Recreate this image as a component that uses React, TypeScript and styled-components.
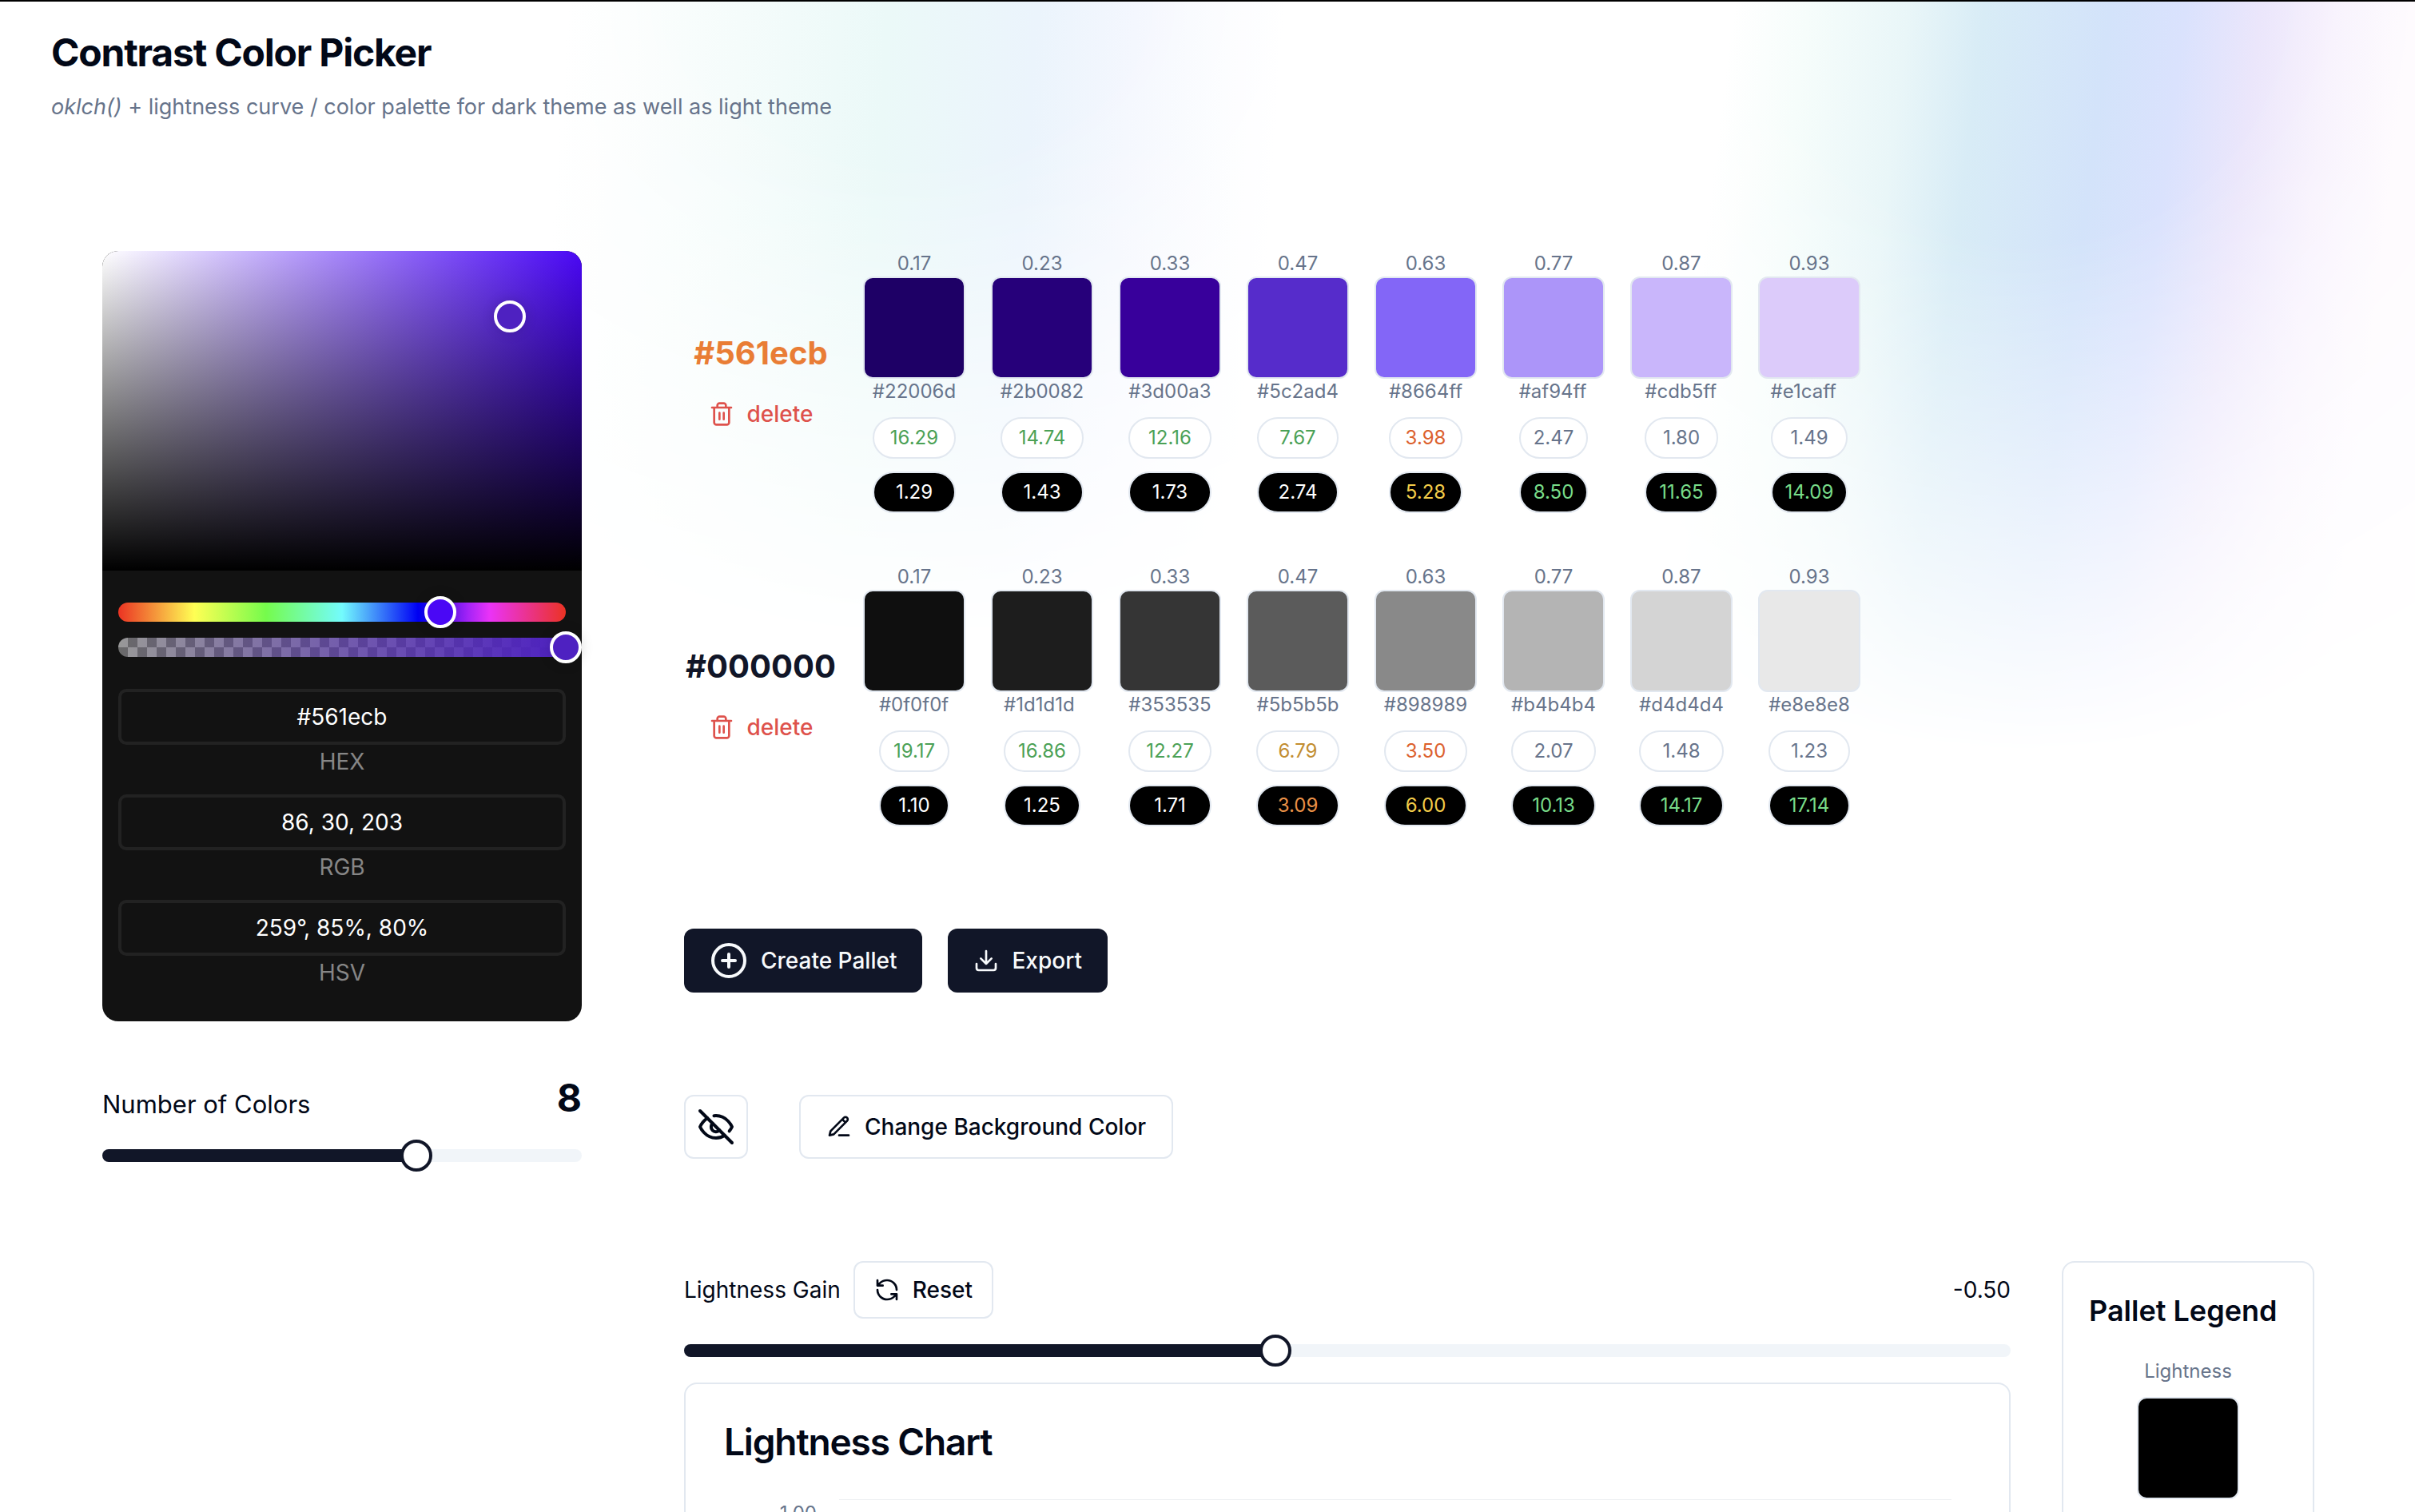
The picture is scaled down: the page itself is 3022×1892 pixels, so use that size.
import React, { useState } from "react";
import styled, { createGlobalStyle } from "styled-components";

const ink = "#020817";
const primary = "#111628";
const muted = "#67748b";
const line = "#e2e8f0";

const GlobalStyle = createGlobalStyle`
  *, *::before, *::after { box-sizing: border-box; }
  body {
    margin: 0;
    background: #fff;
    color: ${ink};
    font-family: Inter, "Liberation Sans", sans-serif;
    font-size: 28px;
    line-height: 40px;
  }
  h1, h2, h3, p { margin: 0; }
  button, input { font: inherit; color: inherit; }
`;

const Page = styled.div`
  position: relative;
  height: 100vh;
  overflow-y: auto;
  scrollbar-width: none;
  border-top: 2px solid #000;
`;

const Glow = styled.div<{ $tint: string; $shape: string }>`
  position: absolute;
  inset: 0 0 auto;
  height: 1000px;
  pointer-events: none;
  background: ${(p) => p.$tint};
  mask-image: ${(p) => p.$shape};
`;

const Header = styled.header`
  position: relative;
  display: flex;
  flex-direction: column;
  gap: 16px;
  padding: 32px 64px 0;
`;

const Title = styled.h1`
  font-size: 48px;
  line-height: 64px;
  font-weight: 700;
  letter-spacing: -0.025em;
`;

const Subtitle = styled.p`
  font-size: 27px;
  color: ${muted};
`;

const Main = styled.main`
  position: relative;
  display: grid;
  grid-template-columns: 600px minmax(0, 1fr);
  align-items: start;
  gap: 128px;
  padding: 160px 126px 128px 128px;
`;

const Side = styled.aside`
  display: flex;
  flex-direction: column;
  gap: 64px;
`;

const Picker = styled.div`
  border-radius: 20px;
  background: #121212;
`;

const Saturation = styled.div`
  position: relative;
  height: 400px;
  border-radius: 20px 20px 0 0;
  background: linear-gradient(0deg, #000, transparent), linear-gradient(90deg, #fff, #4a08f5);
`;

const Cursor = styled.button`
  position: absolute;
  width: 40px;
  height: 40px;
  padding: 0;
  transform: translate(-50%, -50%);
  border: 4px solid #fff;
  border-radius: 50%;
  background: #4e21c1;
  box-shadow: 0 0 16px rgba(0, 0, 0, 0.15);
`;

const PickerBody = styled.div`
  display: flex;
  flex-direction: column;
  gap: 40px;
  padding: 40px 20px;
`;

const Bars = styled.div`
  display: flex;
  flex-direction: column;
  gap: 20px;
`;

const Bar = styled.div<{ $fill: string }>`
  display: flex;
  align-items: center;
  height: 24px;
  border-radius: 12px;
  background: ${(p) => p.$fill};
`;

const BarInput = styled.input<{ $color: string }>`
  appearance: none;
  flex: none;
  width: calc(100% + 40px);
  height: 40px;
  margin: 0 -20px;
  background: transparent;
  &::-webkit-slider-thumb {
    appearance: none;
    width: 40px;
    height: 40px;
    border: 4px solid #fff;
    border-radius: 50%;
    background: ${(p) => p.$color};
    box-shadow: 0 0 16px rgba(0, 0, 0, 0.15);
  }
`;

const Fields = styled.div`
  display: flex;
  flex-direction: column;
  gap: 20px;
`;

const Field = styled.label`
  display: flex;
  flex-direction: column;
  color: #868686;
  line-height: 42px;
  text-align: center;
`;

const FieldInput = styled.input`
  width: 100%;
  height: 70px;
  border: 4px solid #222;
  border-radius: 10px;
  background: transparent;
  color: #fff;
  text-align: center;
`;

const Control = styled.div`
  display: flex;
  flex-direction: column;
  gap: 20px;
`;

const ControlHead = styled.div<{ $align: string }>`
  display: flex;
  align-items: ${(p) => p.$align};
  gap: 16px;
`;

const CountLabel = styled.label`
  font-size: 31px;
  line-height: 48px;
`;

const Count = styled.output`
  margin-left: auto;
  font-size: 48px;
  line-height: 64px;
  font-weight: 700;
`;

const Gain = styled.output`
  margin-left: auto;
`;

const Range = styled.input`
  appearance: none;
  display: block;
  width: 100%;
  height: 40px;
  margin: 0;
  background: transparent;
  &::-webkit-slider-runnable-track {
    height: 16px;
    border-radius: 8px;
    background: linear-gradient(90deg, ${primary} var(--fill), #f1f5f9 var(--fill));
  }
  &::-webkit-slider-thumb {
    appearance: none;
    width: 40px;
    height: 40px;
    margin-top: -12px;
    border: 4px solid ${primary};
    border-radius: 50%;
    background: #fff;
  }
`;

const Content = styled.div`
  display: flex;
  flex-direction: column;
  gap: 128px;
`;

const Palettes = styled.div`
  display: flex;
  flex-direction: column;
  gap: 64px;
`;

const PaletteRow = styled.section`
  display: flex;
  align-items: center;
  gap: 32px;
`;

const PaletteHead = styled.div`
  display: flex;
  flex-direction: column;
  align-items: center;
  width: 192px;
  padding-top: 8px;
`;

const PaletteName = styled.h2<{ $active: boolean }>`
  font-size: 40px;
  line-height: 72px;
  font-weight: 700;
  color: ${(p) => (p.$active ? "#e97d35" : primary)};
`;

const Swatches = styled.ul`
  display: flex;
  gap: 32px;
  margin: 0;
  padding: 0;
  list-style: none;
`;

const SwatchItem = styled.li`
  display: flex;
  flex-direction: column;
  align-items: center;
  width: 128px;
  font-size: 24px;
  line-height: 32px;
  color: ${muted};
`;

const Swatch = styled.div<{ $color: string }>`
  width: 128px;
  height: 128px;
  border: 2px solid ${line};
  border-radius: 12px;
  background: ${(p) => p.$color};
`;

const Details = styled.div`
  display: grid;
  gap: 16px;
`;

const Pill = styled.span<{ $dark?: boolean; $color: string }>`
  display: block;
  height: 52px;
  padding: 0 16px;
  border: 2px solid ${line};
  border-radius: 26px;
  background: ${(p) => (p.$dark ? "#000" : "#fff")};
  color: ${(p) => p.$color};
  line-height: 48px;
  text-align: center;
`;

const Actions = styled.div<{ $gap: number }>`
  display: flex;
  gap: ${(p) => p.$gap}px;
`;

const Button = styled.button<{ $kind: "solid" | "outline" | "danger"; $size?: "small" | "icon" }>`
  display: inline-flex;
  align-items: center;
  justify-content: center;
  gap: 16px;
  height: ${(p) => (p.$size === "small" ? 72 : 80)}px;
  width: ${(p) => (p.$size === "icon" ? "80px" : "auto")};
  padding: 0 ${(p) => (p.$size === "icon" ? 0 : p.$size === "small" ? 24 : 32)}px;
  border: ${(p) => (p.$kind === "outline" ? `2px solid ${line}` : "0")};
  border-radius: 12px;
  background: ${(p) => (p.$kind === "solid" ? primary : p.$kind === "outline" ? "#fff" : "transparent")};
  color: ${(p) => (p.$kind === "solid" ? "#f8fafc" : p.$kind === "danger" ? "#de524c" : ink)};
  font-weight: 500;
  white-space: nowrap;
`;

const Panels = styled.div`
  display: grid;
  grid-template-columns: minmax(0, 1fr) 316px;
  align-items: start;
  gap: 64px;
`;

const Card = styled.section<{ $pad: number }>`
  padding: ${(p) => p.$pad}px;
  border: 2px solid ${line};
  border-radius: 16px;
  background: #fff;
`;

const CardTitle = styled.h2`
  font-size: 46px;
  line-height: 48px;
  font-weight: 600;
  letter-spacing: -0.025em;
`;

const Chart = styled.div`
  display: grid;
  grid-template-columns: 116px minmax(0, 1fr);
  column-gap: 28px;
  padding: 48px 24px 0 0;
  font-size: 24px;
  line-height: 32px;
  color: ${muted};
`;

const Tick = styled.span`
  height: 160px;
  padding-top: 2px;
  text-align: right;
`;

const PlotBand = styled.div`
  border-top: 1px solid #eef0f2;
`;

const Legend = styled(Card)`
  min-height: 640px;
`;

const LegendTitle = styled.h3`
  font-size: 36px;
  line-height: 56px;
  font-weight: 600;
`;

const LegendItem = styled.div`
  display: flex;
  flex-direction: column;
  align-items: center;
  gap: 16px;
  padding-top: 32px;
  font-size: 24px;
  line-height: 32px;
  color: ${muted};
`;

const Icon = ({ size = 32, children }: { size?: number; children: React.ReactNode }) => (
  <svg
    width={size}
    height={size}
    viewBox="0 0 24 24"
    fill="none"
    stroke="currentColor"
    strokeWidth={2}
    strokeLinecap="round"
    strokeLinejoin="round"
    aria-hidden="true"
  >
    {children}
  </svg>
);

const TrashIcon = () => (
  <Icon>
    <path d="M3 6h18M19 6v14c0 1-1 2-2 2H7c-1 0-2-1-2-2V6M8 6V4c0-1 1-2 2-2h4c1 0 2 1 2 2v2M10 11v6M14 11v6" />
  </Icon>
);

const PlusIcon = () => (
  <Icon size={48}>
    <circle cx="12" cy="12" r="10" />
    <path d="M8 12h8M12 8v8" />
  </Icon>
);

const DownloadIcon = () => (
  <Icon>
    <path d="M21 15v4a2 2 0 0 1-2 2H5a2 2 0 0 1-2-2v-4M7 10l5 5 5-5M12 15V3" />
  </Icon>
);

const EyeOffIcon = () => (
  <Icon size={48}>
    <path d="M9.88 9.88a3 3 0 1 0 4.24 4.24" />
    <path d="M10.73 5.08A10.43 10.43 0 0 1 12 5c7 0 10 7 10 7a13.16 13.16 0 0 1-1.67 2.68" />
    <path d="M6.61 6.61A13.526 13.526 0 0 0 2 12s3 7 10 7a9.74 9.74 0 0 0 5.39-1.61" />
    <path d="M2 2l20 20" />
  </Icon>
);

const PencilIcon = () => (
  <Icon>
    <path d="M12 20h9M16.5 3.5a2.12 2.12 0 0 1 3 3L7 19l-4 1 1-4ZM15 5l3 3" />
  </Icon>
);

const RefreshIcon = () => (
  <Icon>
    <path d="M21 12a9 9 0 0 0-9-9 9.75 9.75 0 0 0-6.74 2.74L3 8M3 3v5h5" />
    <path d="M3 12a9 9 0 0 0 9 9 9.75 9.75 0 0 0 6.74-2.74L21 16M16 16h5v5" />
  </Icon>
);

const onWhite = (v: number) => (v >= 7 ? "#4ba156" : v >= 4.5 ? "#c28d30" : v >= 3 ? "#dc612d" : muted);
const onBlack = (v: number) => (v >= 7 ? "#78dc89" : v >= 4.5 ? "#f2cc49" : v >= 3 ? "#ea9147" : "#fff");

type Shade = [lightness: string, hex: string, fill: string, white: string, black: string];

const palettes: { name: string; active: boolean; shades: Shade[] }[] = [
  {
    name: "#561ecb",
    active: true,
    shades: [
      ["0.17", "#22006d", "#1e0066", "16.29", "1.29"],
      ["0.23", "#2b0082", "#26007a", "14.74", "1.43"],
      ["0.33", "#3d00a3", "#38009b", "12.16", "1.73"],
      ["0.47", "#5c2ad4", "#562ccb", "7.67", "2.74"],
      ["0.63", "#8664ff", "#8366f7", "3.98", "5.28"],
      ["0.77", "#af94ff", "#ac95f9", "2.47", "8.50"],
      ["0.87", "#cdb5ff", "#c9b6fb", "1.80", "11.65"],
      ["0.93", "#e1caff", "#dccbfa", "1.49", "14.09"],
    ],
  },
  {
    name: "#000000",
    active: false,
    shades: [
      ["0.17", "#0f0f0f", "#0f0f0f", "19.17", "1.10"],
      ["0.23", "#1d1d1d", "#1d1d1d", "16.86", "1.25"],
      ["0.33", "#353535", "#353535", "12.27", "1.71"],
      ["0.47", "#5b5b5b", "#5b5b5b", "6.79", "3.09"],
      ["0.63", "#898989", "#898989", "3.50", "6.00"],
      ["0.77", "#b4b4b4", "#b4b4b4", "2.07", "10.13"],
      ["0.87", "#d4d4d4", "#d4d4d4", "1.48", "14.17"],
      ["0.93", "#e8e8e8", "#e8e8e8", "1.23", "17.14"],
    ],
  },
];

const hueFill =
  "linear-gradient(90deg, #eb3323, #ffff54 17%, #75fb4c 33%, #73fbfd 50%, #0000f5 67%, #ea33f7 83%, #eb3323)";
const alphaFill =
  "linear-gradient(90deg, rgba(78, 33, 193, 0), #4e21c1), repeating-conic-gradient(#6a6a6a 0 25%, #989898 0 50%) 0 0 / 24px 24px";

const fillOf = (value: number, min: number, max: number) =>
  ({ "--fill": `${((value - min) / (max - min)) * 100}%` }) as React.CSSProperties;

export default function App() {
  const [hue, setHue] = useState(259);
  const [alpha, setAlpha] = useState(100);
  const [count, setCount] = useState(8);
  const [gain, setGain] = useState(-0.5);

  return (
    <>
      <GlobalStyle />
      <Page>
        <Glow
          aria-hidden="true"
          $tint="linear-gradient(94deg, #fff 23%, #f5fcfb 30%, #ebf9f8 36%, #ebf4fc 42%, #f4f7fe 46%, #fff 52%)"
          $shape="radial-gradient(ellipse 34% 80% at 38% 0, #000 25%, transparent)"
        />
        <Glow
          aria-hidden="true"
          $tint="linear-gradient(97deg, #fff 69%, #f6fdfb 72%, #e9f6f8 76%, #d8ecf6 79%, #d3e3fa 84%, #dae2fd 87%, #ebe6fb 90%, #f7f1fd 93%, #fdf9fe 96%)"
          $shape="radial-gradient(ellipse 32% 94% at 84% 0, #000 32%, transparent)"
        />
        <Header>
          <Title>Contrast Color Picker</Title>
          <Subtitle>
            <em>oklch()</em> + lightness curve / color palette for dark theme as well as light theme
          </Subtitle>
        </Header>
        <Main>
          <Side>
            <Picker>
              <Saturation>
                <Cursor aria-label="Saturation and brightness" style={{ left: "85%", top: `${(1 - 203 / 255) * 100}%` }} />
              </Saturation>
              <PickerBody>
                <Bars>
                  <Bar $fill={hueFill}>
                    <BarInput
                      type="range"
                      aria-label="Hue"
                      min={0}
                      max={360}
                      value={hue}
                      onChange={(e) => setHue(Number(e.target.value))}
                      $color="#4a08f5"
                    />
                  </Bar>
                  <Bar $fill={alphaFill}>
                    <BarInput
                      type="range"
                      aria-label="Alpha"
                      min={0}
                      max={100}
                      value={alpha}
                      onChange={(e) => setAlpha(Number(e.target.value))}
                      $color="#4e21c1"
                    />
                  </Bar>
                </Bars>
                <Fields>
                  <Field>
                    <FieldInput defaultValue="#561ecb" />
                    HEX
                  </Field>
                  <Field>
                    <FieldInput defaultValue="86, 30, 203" />
                    RGB
                  </Field>
                  <Field>
                    <FieldInput defaultValue="259°, 85%, 80%" />
                    HSV
                  </Field>
                </Fields>
              </PickerBody>
            </Picker>
            <Control>
              <ControlHead $align="flex-end">
                <CountLabel htmlFor="count">Number of Colors</CountLabel>
                <Count htmlFor="count">{count}</Count>
              </ControlHead>
              <Range
                id="count"
                type="range"
                min={2}
                max={11}
                value={count}
                onChange={(e) => setCount(Number(e.target.value))}
                style={fillOf(count, 2, 11)}
              />
            </Control>
          </Side>
          <Content>
            <Palettes>
              {palettes.map((palette) => (
                <PaletteRow key={palette.name}>
                  <PaletteHead>
                    <PaletteName $active={palette.active}>{palette.name}</PaletteName>
                    <Button $kind="danger">
                      <TrashIcon />
                      delete
                    </Button>
                  </PaletteHead>
                  <Swatches>
                    {palette.shades.map(([lightness, hex, fill, white, black]) => (
                      <SwatchItem key={hex}>
                        {lightness}
                        <Swatch $color={fill} />
                        <Details>
                          <span>{hex}</span>
                          <Pill $color={onWhite(Number(white))}>{white}</Pill>
                          <Pill $dark $color={onBlack(Number(black))}>
                            {black}
                          </Pill>
                        </Details>
                      </SwatchItem>
                    ))}
                  </Swatches>
                </PaletteRow>
              ))}
            </Palettes>
            <Actions $gap={32}>
              <Button $kind="solid">
                <PlusIcon />
                Create Pallet
              </Button>
              <Button $kind="solid">
                <DownloadIcon />
                Export
              </Button>
            </Actions>
            <Actions $gap={64}>
              <Button $kind="outline" $size="icon" aria-label="Hide contrast">
                <EyeOffIcon />
              </Button>
              <Button $kind="outline">
                <PencilIcon />
                Change Background Color
              </Button>
            </Actions>
            <Panels>
              <Control>
                <ControlHead $align="center">
                  <label htmlFor="gain">Lightness Gain</label>
                  <Button $kind="outline" $size="small" onClick={() => setGain(0)}>
                    <RefreshIcon />
                    Reset
                  </Button>
                  <Gain htmlFor="gain">{gain.toFixed(2)}</Gain>
                </ControlHead>
                <Range
                  id="gain"
                  type="range"
                  min={-2.5}
                  max={2}
                  step={0.01}
                  value={gain}
                  onChange={(e) => setGain(Number(e.target.value))}
                  style={fillOf(gain, -2.5, 2)}
                />
                <Card $pad={48}>
                  <CardTitle>Lightness Chart</CardTitle>
                  <Chart>
                    {["1.00", "0.75", "0.50", "0.25"].map((tick) => (
                      <React.Fragment key={tick}>
                        <Tick>{tick}</Tick>
                        <PlotBand />
                      </React.Fragment>
                    ))}
                  </Chart>
                </Card>
              </Control>
              <Legend $pad={32}>
                <LegendTitle>Pallet Legend</LegendTitle>
                <LegendItem>
                  Lightness
                  <Swatch $color="#000" />
                </LegendItem>
              </Legend>
            </Panels>
          </Content>
        </Main>
      </Page>
    </>
  );
}
